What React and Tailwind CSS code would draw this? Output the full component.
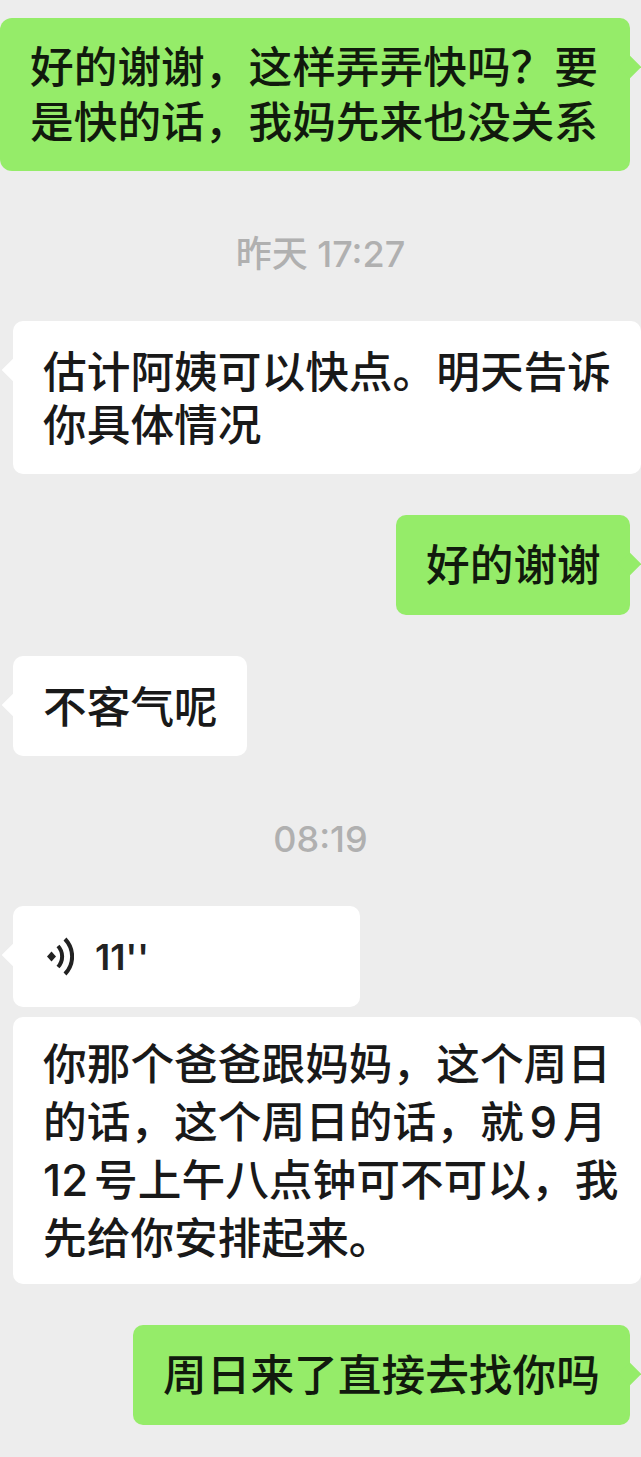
const cjk = "font-['Inter','Noto_Sans_CJK_SC',sans-serif]"

function Tail({ side, color }) {
    return (
        <span
            className={`absolute top-[49px] w-[16px] h-[16px] rotate-45 -translate-y-1/2 ${color} ${side === 'right' ? 'right-[-8px]' : 'left-[-8px]'}`}
        />
    )
}

function Sent({ lines, className = '' }) {
    return (
        <div className={`relative self-end mr-[11px] h-[100px] flex items-center pl-[30px] rounded-[10px] bg-[#95ec69] text-[#111a0d] text-[43.7px] font-medium leading-[55px] whitespace-nowrap ${className}`}>
            <div>
                {lines.map((line, i) => <div key={i}>{line}</div>)}
            </div>
            <Tail side="right" color="bg-[#95ec69]" />
        </div>
    )
}

function Received({ lines, leading = 'leading-[53px]', tail = true, className = '' }) {
    return (
        <div className={`relative self-start ml-[13px] flex items-center pl-[30px] pt-[2px] rounded-[10px] bg-white text-[#191919] text-[43.7px] font-medium whitespace-nowrap ${leading} ${className}`}>
            <div>
                {lines.map((line, i) => <div key={i}>{line}</div>)}
            </div>
            {tail && <Tail side="left" color="bg-white" />}
        </div>
    )
}

function Time({ children, className = '' }) {
    return (
        <div className={`text-center text-[#b0b0b0] text-[36px] font-medium leading-[40px] ${className}`}>
            {children}
        </div>
    )
}

function VoiceIcon() {
    return (
        <svg width="28" height="39" viewBox="0 0 28 39" fill="none" stroke="#222" strokeWidth="4">
            <path d="M1 19.5 L5.5 14.5 L10 19.5 L5.5 24.5 Z" fill="#222" stroke="none" />
            <path d="M12 9 C17.5 15 17.5 24 12 30" />
            <path d="M19 2 C28.5 12 28.5 27 19 37" />
        </svg>
    )
}

export default function App() {
    return (
        <div className={`w-[641px] h-[1457px] overflow-hidden bg-[#ededed] flex flex-col pt-[18px] ${cjk}`}>
            <Sent
                className="w-[630px] h-[153px] rounded-l-[12px]"
                lines={['好的谢谢，这样弄弄快吗？要', '是快的话，我妈先来也没关系']}
            />
            <Time className="mt-[63px]">昨天 17:27</Time>
            <Received
                className="w-[628px] h-[153px] mt-[47px] mb-[41px]"
                lines={['估计阿姨可以快点。明天告诉', '你具体情况']}
            />
            <Sent className="w-[234px]" lines={['好的谢谢']} />
            <Received className="w-[234px] h-[100px] mt-[41px]" lines={['不客气呢']} />
            <Time className="mt-[63px]">08:19</Time>
            <div className="relative self-start ml-[13px] mt-[47px] w-[347px] h-[101px] flex items-center gap-[21px] pl-[33px] rounded-[10px] bg-white text-[#222] text-[36px] font-semibold">
                <VoiceIcon />
                <span>11''</span>
                <Tail side="left" color="bg-white" />
            </div>
            <Received
                className="w-[628px] h-[267px] mt-[10px]"
                leading="leading-[58px]"
                tail={false}
                lines={[
                    '你那个爸爸跟妈妈，这个周日',
                    <>的话，这个周日的话，就<span className="mx-[6px]">9</span>月</>,
                    <>12<span className="ml-[6px]">号</span>上午八点钟可不可以，我</>,
                    '先给你安排起来。',
                ]}
            />
            <Sent className="w-[497px] mt-[41px]" lines={['周日来了直接去找你吗']} />
        </div>
    )
}
